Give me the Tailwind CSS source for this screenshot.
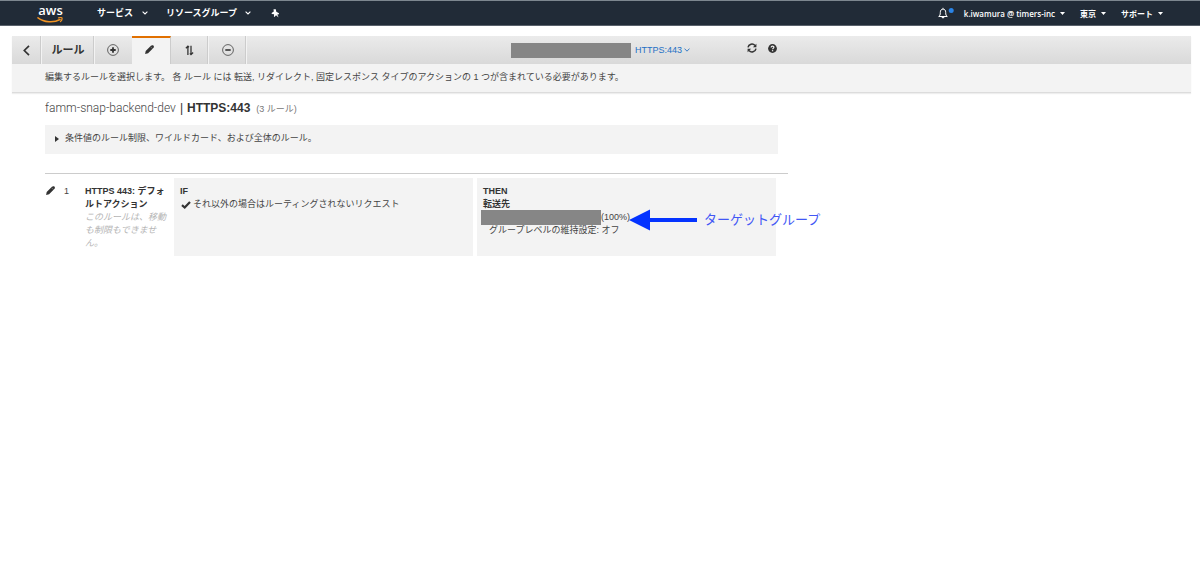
<!DOCTYPE html>
<html lang="ja">
<head>
<meta charset="utf-8">
<meta name="viewport" content="width=device-width, initial-scale=1">
<title>ルール | HTTPS:443</title>
<script src="https://cdn.jsdelivr.net/npm/@tailwindcss/browser@4"></script>
</head>
<body class="min-h-screen bg-white font-['Liberation_Sans','Noto_Sans_CJK_JP',sans-serif] text-[9px] leading-[13px] text-[#444]">

<header class="flex h-[26px] items-center border-t border-b border-t-[#7d878f] border-b-[#59616b] bg-[#212b37] px-[37px] text-white">
  <a href="#" aria-label="aws" class="flex flex-col items-center">
    <span class="font-['Open_Sans',sans-serif] text-[13px] leading-[13px] font-semibold">aws</span>
    <svg class="h-[6px] w-[27px]" viewBox="0 0 27 6">
      <path d="M1 .8C7 5.500 17 6 23 2.500" fill="none" stroke="#f29423" stroke-width="1.500" stroke-linecap="round"/>
      <path d="M21.500.900C23 .4 24.500.500 25 .9C25.300 2 24.600 3.600 23.500 4.700" fill="none" stroke="#f29423" stroke-width="1.200" stroke-linecap="round"/>
    </svg>
  </a>
  <nav class="ml-[33px] flex items-center font-bold">
    <button class="flex items-center gap-[9px]">サービス
      <svg class="h-1 w-[6px]" viewBox="0 0 6 4" fill="none" stroke="#fff" stroke-width="1.100"><path d="M.6.700 3 3 5.400.700"/></svg>
    </button>
    <button class="ml-[18px] flex items-center gap-2">リソースグループ
      <svg class="h-1 w-[6px]" viewBox="0 0 6 4" fill="none" stroke="#fff" stroke-width="1.100"><path d="M.6.700 3 3 5.400.700"/></svg>
    </button>
    <button aria-label="ピン留め" class="ml-5">
      <svg class="h-[9px] w-[9px]" viewBox="0 0 9 9" fill="#fff"><path d="M2.500.300 4.800.200 5.300 2.700 8 4.300 7.900 5.300 6.300 5.500 7.600 8.600 5 6.300 3.500 7.900 2.900 7.600 3.100 5.300.800 4.900.600 4 2.800 2.400Z"/></svg>
    </button>
  </nav>
  <div class="ml-auto flex items-center font-['Open_Sans','Noto_Sans_CJK_JP',sans-serif] text-[8px] font-semibold">
    <button aria-label="通知" class="mr-[10px]">
      <svg class="h-3 w-4" viewBox="0 0 16 12"><path d="M.7 9.500C2 8.700 2.300 7.700 2.300 5.500 2.300 3.400 3.200 2.100 5 2.100S7.700 3.400 7.700 5.500C7.700 7.700 8 8.700 9.300 9.500Z" fill="none" stroke="#fff" stroke-linejoin="round"/><path d="M5 .8V2M3.900 10.300A1.200 1.200 0 0 0 6.100 10.300Z" stroke="#fff" fill="#fff" stroke-width=".8"/><circle cx="13.200" cy="3.500" r="2.500" fill="#2a84e6"/></svg>
    </button>
    <button class="flex items-center gap-[5px]">k.iwamura @ timers-inc
      <svg class="h-[3px] w-[5px]" viewBox="0 0 5 3" fill="#fff"><path d="M0 0H5L2.500 3Z"/></svg>
    </button>
    <button class="ml-[15px] flex items-center gap-[5px]">東京
      <svg class="h-[3px] w-[5px]" viewBox="0 0 5 3" fill="#fff"><path d="M0 0H5L2.500 3Z"/></svg>
    </button>
    <button class="ml-[15px] flex items-center gap-[5px]">サポート
      <svg class="h-[3px] w-[5px]" viewBox="0 0 5 3" fill="#fff"><path d="M0 0H5L2.500 3Z"/></svg>
    </button>
  </div>
</header>

<section class="mt-[10px] mr-[9px] ml-3 border-b border-[#dcdcdc] bg-[#f3f3f3] shadow-[0_1px_1px_#eee]">
  <div class="flex h-7 items-stretch bg-linear-to-b from-[#ebebeb] to-[#d9d9d9] text-[#333]">
    <button aria-label="戻る" class="flex w-[30px] items-center justify-center border-r border-[#f3f3f3] shadow-[inset_-1px_0_#ccc]">
      <svg class="h-[11px] w-[7px]" viewBox="0 0 7 11" fill="none" stroke="#333" stroke-width="1.700"><path d="M6 .8 1.300 5.500 6 10.200"/></svg>
    </button>
    <h1 class="flex w-[53px] items-center justify-center border-r border-[#f3f3f3] text-[11px] font-bold shadow-[inset_-1px_0_#ccc]">ルール</h1>
    <button aria-label="ルールの追加" class="flex w-[37px] items-center justify-center pr-px">
      <svg class="h-3 w-3" viewBox="0 0 12 12" fill="none"><circle cx="6" cy="6" r="5.400" stroke="#555" stroke-width=".9"/><path d="M6 3.300V8.700M3.300 6H8.700" stroke="#333" stroke-width="1.800"/></svg>
    </button>
    <button aria-label="ルールの編集" class="flex w-[39px] items-center justify-center border-t-2 border-r border-t-[#e17000] border-r-[#ccc] bg-[#f3f3f3] pr-1 pb-1">
      <svg class="h-[9px] w-[9px]" viewBox="0 0 9 9"><path d="M.1 8.900.700 5.900 5.900.700C6.800-.1 7.700 0 8.400.600S9.100 2.200 8.300 3L3.100 8.200Z" fill="#333"/><path d="M5.500 1.700 7.300 3.500" stroke="#ddd" stroke-width=".4"/></svg>
    </button>
    <button aria-label="ルールの並べ替え" class="flex w-[38px] items-center justify-center border-r border-[#f3f3f3] shadow-[inset_-1px_0_#ccc]">
      <svg class="h-[11px] w-[9px]" viewBox="0 0 9 11" fill="none" stroke="#333" stroke-width="1.300"><path d="M2.900 10V1.200M.9 3.200 2.900 1.200 4 2.300M6 .8V9.600M4.900 8.400 6 9.600 8.100 7.500"/></svg>
    </button>
    <button aria-label="ルールの削除" class="flex w-[38px] items-center justify-center border-r border-[#f3f3f3] shadow-[inset_-1px_0_#ccc]">
      <svg class="h-3 w-3" viewBox="0 0 12 12" fill="none"><circle cx="6" cy="6" r="5.400" stroke="#555" stroke-width=".9"/><path d="M3.300 6H8.700" stroke="#333" stroke-width="1.600"/></svg>
    </button>
    <div class="ml-[264px] flex items-center">
      <span class="h-[15px] w-[120px] bg-[#868686]"></span>
      <button class="ml-1 flex items-center gap-[2px] text-[#2470c5]">HTTPS:443
        <svg class="h-1 w-[6px]" viewBox="0 0 6 4" fill="none" stroke="#2470c5" stroke-width=".9"><path d="M.5.600 3 3.200 5.500.600"/></svg>
      </button>
      <button aria-label="更新" class="mb-1 ml-[57px]">
        <svg class="h-[10px] w-[10px]" viewBox="0 0 10 10"><path d="M1 4.300A4 4 0 0 1 8 2.500M9 5.700A4 4 0 0 1 2 7.500" fill="none" stroke="#333" stroke-width="1.500"/><path d="M9.400.7V4.200H5.900ZM.6 9.300V5.800H4.100Z" fill="#333"/></svg>
      </button>
      <button aria-label="ヘルプ" class="mb-1 ml-[11px]">
        <svg class="h-[9px] w-[9px]" viewBox="0 0 9 9"><circle cx="4.500" cy="4.500" r="4.400" fill="#333"/><path d="M3.100 3.500C3.200 1.700 6 1.800 5.900 3.300 5.800 4.200 4.600 4.200 4.600 5.300" fill="none" stroke="#eee" stroke-width="1.200"/><path d="M3.900 6.100H5.200V7.300H3.900Z" fill="#eee"/></svg>
      </button>
    </div>
  </div>
  <p class="px-[33px] pt-[7px] pb-2">編集するルールを選択します。 各 ルール には 転送, リダイレクト, 固定レスポンス タイプのアクションの 1 つが含まれている必要があります。</p>
</section>

<main class="max-w-[788px] pl-[45px]">
  <h2 class="mt-[7px] flex items-baseline text-xs leading-4 text-[#333]"><span class="font-['Roboto',sans-serif] font-light text-[#444]">famm-snap-backend-dev</span><span class="mx-1">|</span><strong>HTTPS:443</strong><span class="ml-[6px] text-[9px] text-[#777]">(3 ルール)</span></h2>

  <details class="mt-2 mr-[10px] bg-[#f3f3f3]">
    <summary class="flex list-none items-center gap-[6px] px-[10px] pt-[7px] pb-[9px]">
      <svg class="h-[6px] w-1" viewBox="0 0 4 6" fill="#333"><path d="M0 0 4 3 0 6Z"/></svg>条件値のルール制限、ワイルドカード、および全体のルール。
    </summary>
  </details>

  <section class="mt-[19px] border-t border-[#ccc] pt-1">
    <div class="flex items-stretch pr-3">
      <button aria-label="編集" class="mt-[7px] ml-px h-[10px] w-[10px] shrink-0">
        <svg class="h-[9px] w-[9px]" viewBox="0 0 9 9"><path d="M.1 8.900.700 5.900 5.900.700C6.800-.1 7.700 0 8.400.600S9.100 2.200 8.300 3L3.100 8.200Z" fill="#333"/><path d="M5.500 1.700 7.300 3.500" stroke="#ddd" stroke-width=".4"/></svg>
      </button>
      <span class="mt-[7px] ml-2 w-[21px] shrink-0">1</span>
      <div class="mt-[7px] mr-[5px] w-[84px] shrink-0">
        <strong class="block text-[#333]">HTTPS 443: デフォルトアクション</strong>
        <em class="block text-[#b5b5b5]">このルールは、移動も制限もできません。</em>
      </div>
      <div class="grid min-h-[78px] flex-1 grid-cols-2 gap-1">
        <div class="bg-[#f3f3f3] px-[6px] py-[7px]">
          <strong class="block text-[#333]">IF</strong>
          <p class="flex items-center gap-[2px] pl-px"><svg class="h-2 w-[10px]" viewBox="0 0 10 8" fill="none" stroke="#333" stroke-width="2.200"><path d="M1 4.200 3.700 6.500 9 1"/></svg>それ以外の場合はルーティングされないリクエスト</p>
        </div>
        <div class="relative bg-[#f3f3f3] py-[7px]">
          <strong class="block pl-[6px] text-[#333]">THEN</strong>
          <strong class="block pl-[6px] text-[#333]">転送先</strong>
          <p class="flex h-[13px] items-center pl-1"><span class="h-[15px] w-[120px] bg-[#868686]"></span>(100%)</p>
          <p class="pl-3">グループレベルの維持設定: オフ</p>
          <div class="absolute top-[31px] left-[152px] flex items-center gap-[7px] whitespace-nowrap text-[13px] leading-5 text-[#4257f5]">
            <svg class="h-[22px] w-[68px]" viewBox="0 0 68 22" fill="#0433ff"><path d="M0 11 21 .5V9H68V13H21V21.500Z"/></svg>ターゲットグループ
          </div>
        </div>
      </div>
    </div>
  </section>
</main>
</body>
</html>
